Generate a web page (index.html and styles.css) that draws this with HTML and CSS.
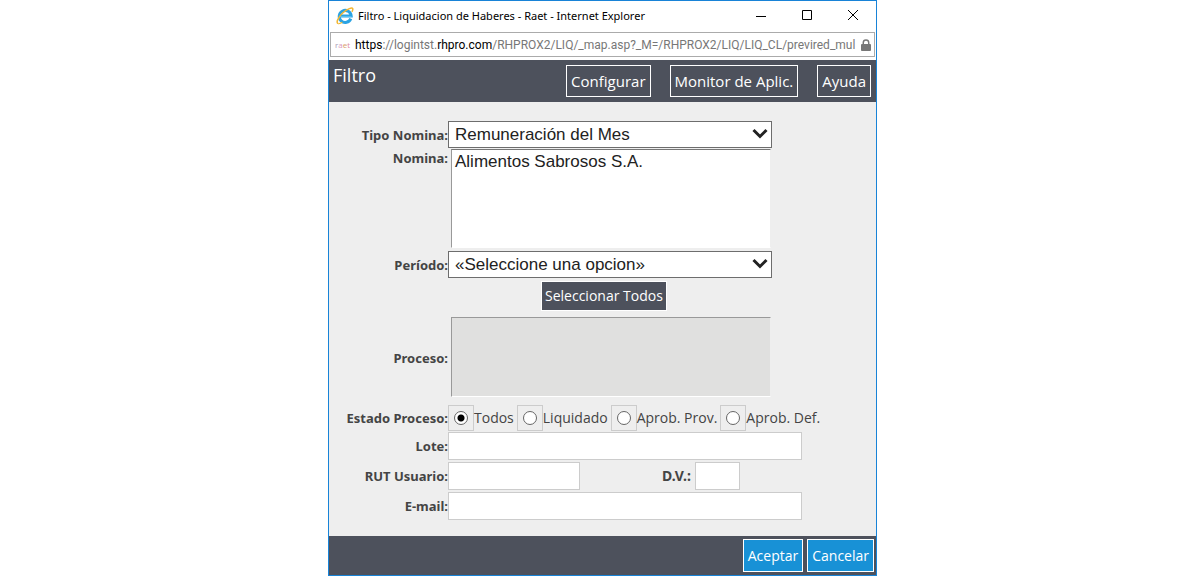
FILE: index.html
```html
<!DOCTYPE html>
<html lang="es">
<head>
<meta charset="utf-8">
<title>Filtro - Liquidacion de Haberes - Raet</title>
<link rel="stylesheet" href="styles.css">
</head>
<body>
<div class="window">
  <div class="titlebar">
    <svg class="ie-icon" width="18" height="18" viewBox="0 0 18 18" aria-hidden="true">
      <path d="M14.8 11.6A6 6 0 1 1 15.2 9H4.500" fill="none" stroke="#2ba3e3" stroke-width="3"/>
      <path d="M3 9.500H15.500" stroke="#55bdf0" stroke-width="1"/>
      <path d="M2.400 16.600C-.8 16.200 2.500 9.500 7.500 5.300C11.500 1.800 16 .2 16.700 1.600C17.100 2.500 16.500 3.900 15.900 4.900" fill="none" stroke="#f2b632" stroke-width="1.500"/>
      <path d="M2.400 16.600C3.700 16.900 5.200 16 6.300 15.300" fill="none" stroke="#f2b632" stroke-width="1.300"/>
    </svg>
    <span class="title">Filtro - Liquidacion de Haberes - Raet - Internet Explorer</span>
    <button class="caption-button" type="button" aria-label="Minimizar"><svg width="12" height="12" viewBox="0 0 12 12"><path d="M1 6.500H11"/></svg></button>
    <button class="caption-button" type="button" aria-label="Maximizar"><svg width="12" height="12" viewBox="0 0 12 12"><path d="M1.500 .5H10.500V9.500H1.500Z"/></svg></button>
    <button class="caption-button" type="button" aria-label="Cerrar"><svg width="12" height="12" viewBox="0 0 12 12"><path d="M1 0L11 10M11 0L1 10"/></svg></button>
  </div>

  <div class="address">
    <span class="favicon"><span class="fav-r">r</span><span class="fav-a">a</span><span class="fav-e">e</span><span class="fav-t">t</span></span>
    <span class="url"><b>https</b>://logintst.<b>rhpro.com</b>/RHPROX2/LIQ/_map.asp?_M=/RHPROX2/LIQ/LIQ_CL/previred_mul</span>
    <svg class="lock" width="10" height="12" viewBox="0 0 11 13" aria-hidden="true">
      <path d="M2.500 6V4A3 3 0 0 1 8.500 4V6" fill="none" stroke="#777" stroke-width="1.600"/>
      <rect x="0" y="5.500" width="11" height="7.500" rx="1" fill="#777"/>
    </svg>
  </div>

  <header class="toolbar">
    <h1>Filtro</h1>
    <button class="tool" type="button">Configurar</button>
    <button class="tool" type="button">Monitor de Aplic.</button>
    <button class="tool" type="button">Ayuda</button>
  </header>

  <form class="filter" id="filter">
    <label class="name" for="tipo">Tipo Nomina:</label>
    <div class="dropdown">
      <select id="tipo"><option>Remuneración del Mes</option></select>
      <svg class="chevron" width="16" height="12" viewBox="0 0 16 12"><path d="M1.500 2L8 8.500L14.500 2"/></svg>
    </div>

    <label class="name top" for="nomina">Nomina:</label>
    <select class="list" id="nomina" size="5"><option>Alimentos Sabrosos S.A.</option></select>

    <label class="name" for="periodo">Período:</label>
    <div class="dropdown">
      <select id="periodo"><option>«Seleccione una opcion»</option></select>
      <svg class="chevron" width="16" height="12" viewBox="0 0 16 12"><path d="M1.500 2L8 8.500L14.500 2"/></svg>
    </div>

    <div class="select-all"><button type="button">Seleccionar Todos</button></div>

    <label class="name" for="proceso">Proceso:</label>
    <select class="list process" id="proceso" size="4" disabled></select>

    <span class="name" id="estado">Estado Proceso:</span>
    <div class="radios" role="radiogroup" aria-labelledby="estado">
      <label><span class="box"><input type="radio" name="estado" checked></span>Todos</label>
      <label><span class="box"><input type="radio" name="estado"></span>Liquidado</label>
      <label><span class="box"><input type="radio" name="estado"></span>Aprob. Prov.</label>
      <label><span class="box"><input type="radio" name="estado"></span>Aprob. Def.</label>
    </div>

    <label class="name" for="lote">Lote:</label>
    <input class="field" id="lote" type="text">

    <label class="name" for="rut">RUT Usuario:</label>
    <div class="rut">
      <input class="field" id="rut" type="text">
      <label class="name" for="dv">D.V.:</label>
      <input class="field" id="dv" type="text">
    </div>

    <label class="name" for="email">E-mail:</label>
    <input class="field" id="email" type="text">
  </form>

  <footer class="actions">
    <button type="submit" form="filter">Aceptar</button>
    <button type="button">Cancelar</button>
  </footer>
</div>
</body>
</html>
```
FILE: styles.css
```css
* { box-sizing: border-box; }

body {
  margin: 0;
  padding-left: 5px;
  background: #fff;
  color: #444;
  font: 14px/20px "Open Sans", "Noto Sans", sans-serif;
}

button, input, select { margin: 0; font: inherit; }
button { cursor: pointer; white-space: nowrap; }

.window {
  display: flex;
  flex-direction: column;
  max-width: 549px;
  min-height: 100vh;
  margin: 0 auto;
  border: 1px solid #1883d7;
  background: #fff;
}

.titlebar {
  display: flex;
  align-items: center;
  height: 30px;
  padding-left: 7px;
  color: #000;
}
.title {
  flex: 1;
  padding-left: 4px;
  font: 11px/16px "Noto Sans", sans-serif;
  white-space: nowrap;
}
.caption-button {
  width: 46px;
  height: 28px;
  padding: 0;
  border: 0;
  background: none;
}
.caption-button svg {
  display: block;
  margin: auto;
  fill: none;
  stroke: #000;
}

.address {
  display: flex;
  align-items: center;
  height: 25px;
  margin: 1px 1px 3px;
  padding: 0 3px 0 4px;
  border: 1px solid #ababab;
}
.favicon {
  width: 20px;
  font: 8px/12px "Open Sans", sans-serif;
}
.fav-r { color: #a99bb5; }
.fav-a { color: #d99ac0; }
.fav-e { color: #d9a066; }
.fav-t { color: #e08aa0; }
.url {
  flex: 1;
  overflow: hidden;
  color: #777;
  font: 12px/18px Roboto, sans-serif;
  white-space: nowrap;
}
.url b { color: #000; font-weight: 400; }

.toolbar {
  display: flex;
  gap: 19px;
  height: 42px;
  padding: 5px 5px 0 4px;
  background: #4d515c;
  color: #fff;
}
.toolbar h1 {
  flex: 1;
  margin: 0;
  font-size: 18px;
  font-weight: 400;
  line-height: 20px;
}
.tool {
  height: 32px;
  padding: 0 4px;
  border: 1px solid #fff;
  background: #4d515c;
  color: #fff;
  font-size: 15px;
}

.filter {
  flex: 1;
  display: grid;
  grid-template-columns: 119px minmax(0, 1fr);
  align-content: start;
  align-items: center;
  padding: 19px 74px 15px 0;
  background: #eee;
}
.name {
  font: bold 13px/20px "Noto Sans", sans-serif;
  text-align: right;
}
.name.top { align-self: start; }

.dropdown {
  position: relative;
  margin-right: 30px;
}
.dropdown select {
  display: block;
  width: 100%;
  height: 27px;
  padding: 0 6px;
  border: 1px solid #6d6d6d;
  border-radius: 0;
  appearance: none;
  background: #fff;
  color: #222;
  font: 17px/24px "Liberation Sans", Arial, sans-serif;
}
.chevron {
  position: absolute;
  top: 7px;
  right: 4px;
  fill: none;
  stroke: #222;
  stroke-width: 3;
  pointer-events: none;
}

.list {
  height: 99px;
  margin: 1px 31px 3px 3px;
  padding: 0;
  overflow: hidden;
  border: solid;
  border-width: 1px;
  border-color: #777 #eee #fff #999;
  border-radius: 0;
  background: #fff;
  color: #222;
  font: 17px/20px "Liberation Sans", Arial, sans-serif;
}
.list option { padding: 2px 3px; }
.list.process {
  height: 80px;
  margin-top: 6px;
  margin-bottom: 8px;
  border-color: #999 #eee #fff #999;
  background: #e0e0df;
  opacity: 1;
}

.select-all {
  grid-column: 2;
  padding: 3px 0 0 93px;
}
.select-all button {
  height: 30px;
  padding: 0 3px;
  border: 1px solid #fff;
  background: #4d515c;
  color: #fff;
}

.radios { display: flex; gap: 3px; }
.radios label {
  display: flex;
  align-items: center;
  white-space: nowrap;
}
.box {
  display: grid;
  place-items: center;
  width: 26px;
  height: 26px;
  border: 1px solid #ccc;
}
.box input {
  width: 14px;
  height: 14px;
  border: 1px solid #666;
  border-radius: 50%;
  appearance: none;
  background: #fff;
}
.box input:checked { background: radial-gradient(circle, #000 0 3px, #fff 4px); }

.field {
  width: 100%;
  height: 28px;
  margin: 1px 0;
  padding: 0 4px;
  border: 1px solid #ccc;
  background: #fff;
}
.rut {
  display: grid;
  grid-template-columns: 132px 1fr 45px;
  gap: 4px;
  align-items: center;
  margin-right: 62px;
}
.rut .name { font-size: 14px; }

.actions {
  display: flex;
  justify-content: flex-end;
  gap: 4px;
  height: 39px;
  padding: 3px 2px 3px 0;
  background: #4d515c;
}
.actions button {
  padding: 0 4px;
  border: 1px solid #fff;
  background: #1891d6;
  color: #fff;
}
```
